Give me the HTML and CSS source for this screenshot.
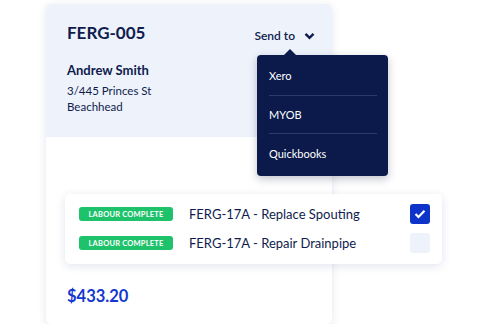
FILE: index.html
```html
<!DOCTYPE html>
<html lang="en">

<head>
  <meta name="viewport" content="width=device-width, initial-scale=1.0">
  <title>FERG-005</title>
  <link rel="stylesheet" href="styles.css">
</head>

<body>
  <div id="stage">
    <div class="card">
      <div class="head">
        <div class="titleRow">
          <h1>FERG-005</h1>
          <div class="sendTo">Send to
            <svg width="11" height="8" viewBox="0 0 11 8"><path d="M1.5 1.8 L5.5 5.8 L9.5 1.8" fill="none" stroke="#0f1c4d" stroke-width="2.4"/></svg>
          </div>
        </div>
        <div class="customer">Andrew Smith</div>
        <div class="address">3/445 Princes St<br>Beachhead</div>
      </div>
      <div class="jobs">
        <div class="job">
          <span class="badge">LABOUR COMPLETE</span>
          <span class="jobName">FERG-17A - Replace Spouting</span>
          <span class="check checked">
            <svg width="12" height="10" viewBox="0 0 12 10"><path d="M1.5 5 L4.5 8 L10.5 1.8" fill="none" stroke="#fff" stroke-width="2.2"/></svg>
          </span>
        </div>
        <div class="job">
          <span class="badge">LABOUR COMPLETE</span>
          <span class="jobName">FERG-17A - Repair Drainpipe</span>
          <span class="check"></span>
        </div>
      </div>
      <div class="total">$433.20</div>

      <!-- dropdown for Send to -->
      <div class="menu">
        <div class="item">Xero</div>
        <div class="item">MYOB</div>
        <div class="item">Quickbooks</div>
      </div>
    </div>
  </div>
</body>

</html>
```

FILE: styles.css
```css
body {
  margin: 0;
  background: #fff;
  font-family: 'Lato', 'Helvetica', 'Arial', sans-serif;
  color: #0f1c4d;
}

#stage {
  padding: 4px 0 0 46px;
}

.card {
  position: relative;
  width: 286px;
  height: 320px;
  background: #fff;
  border-radius: 5px;
  box-shadow: 0 2px 8px rgba(30, 50, 120, 0.12);
}

.head {
  background: #eef2fb;
  border-radius: 5px 5px 0 0;
  height: 133px;
  box-sizing: border-box;
  padding: 18px 17px 0 21px;
}

.titleRow {
  display: flex;
  justify-content: space-between;
  align-items: center;
}

h1 {
  margin: 0;
  font-size: 17px;
  line-height: 20px;
  font-weight: 700;
}

.sendTo {
  display: flex;
  align-items: center;
  gap: 9px;
  margin-top: 6px;
  font-size: 12px;
  font-weight: 600;
}

.customer {
  margin-top: 19px;
  font-size: 13px;
  line-height: 16px;
  font-weight: 700;
}

.address {
  margin-top: 5px;
  font-size: 11.5px;
  line-height: 16px;
}

.jobs {
  margin: 57px 0 0 19px;
  width: 377px;
  height: 70px;
  box-sizing: border-box;
  padding: 10px 12px 0 14px;
  background: #fff;
  border-radius: 5px;
  box-shadow: 0 2px 10px rgba(30, 50, 120, 0.13);
  display: flex;
  flex-direction: column;
  gap: 9px;
}

.job {
  display: flex;
  align-items: center;
  height: 20px;
}

.badge {
  width: 94px;
  height: 14px;
  border-radius: 3px;
  background: #1ec26b;
  color: #fff;
  font-size: 7.5px;
  font-weight: 700;
  letter-spacing: 0.2px;
  display: flex;
  align-items: center;
  justify-content: center;
}

.jobName {
  margin-left: 16px;
  flex: 1;
  font-size: 13px;
}

.check {
  width: 20px;
  height: 20px;
  border-radius: 3px;
  background: #eef2fb;
  display: flex;
  align-items: center;
  justify-content: center;
}

.check.checked {
  background: #0d33c9;
}

.total {
  margin: 22px 0 0 21px;
  font-size: 16.5px;
  font-weight: 700;
  color: #1537cf;
}

.menu {
  position: absolute;
  left: 211px;
  top: 51px;
  width: 131px;
  height: 121px;
  box-sizing: border-box;
  padding: 0 11px 0 12px;
  background: #0b1a4a;
  border-radius: 4px;
  box-shadow: 0 3px 8px rgba(10, 20, 60, 0.25);
}

.menu::before {
  content: '';
  position: absolute;
  left: 27px;
  top: -6px;
  border-left: 6px solid transparent;
  border-right: 6px solid transparent;
  border-bottom: 6px solid #0b1a4a;
}

.item {
  box-sizing: border-box;
  height: 38px;
  display: flex;
  align-items: center;
  color: #fff;
  font-size: 11px;
  border-bottom: 1px solid #2c3b6c;
}

.item:first-child {
  height: 41px;
}

.item:last-child {
  border-bottom: none;
}
```
